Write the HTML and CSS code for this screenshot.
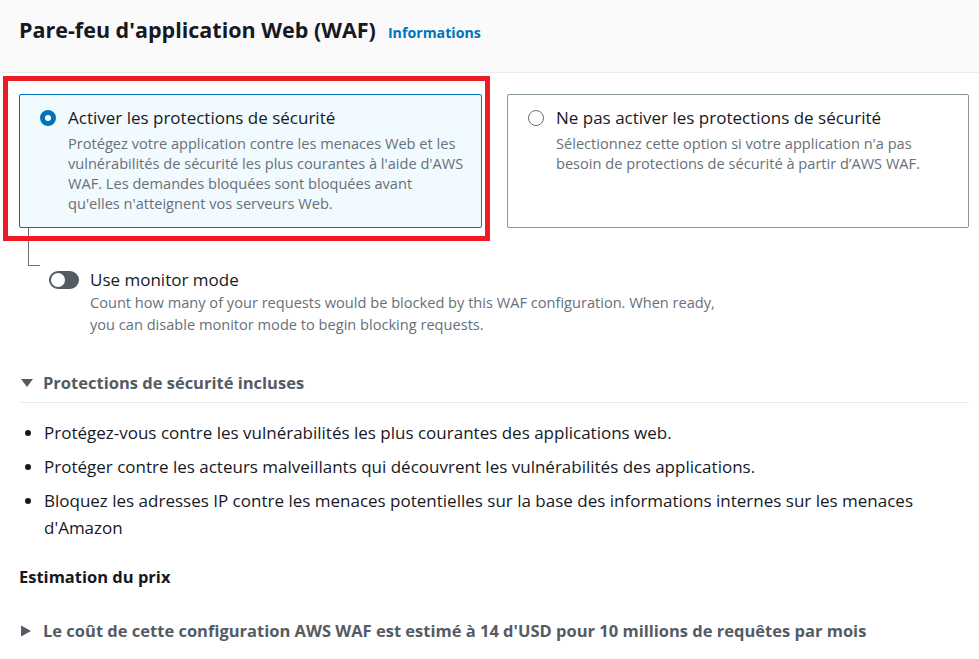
FILE: index.html
```html
<!DOCTYPE html>
<html lang="fr">
<head>
<meta charset="utf-8">
<title>Pare-feu d'application Web (WAF)</title>
<link rel="stylesheet" href="styles.css">
</head>
<body>
<header class="header">
  <h2 class="title">Pare-feu d'application Web (WAF)</h2>
  <a class="info" href="#">Informations</a>
</header>
<main class="main">
  <div class="tiles">
    <div class="tile tile-selected">
      <span class="radio radio-on"></span>
      <div class="tile-body">
        <div class="tile-title">Activer les protections de sécurité</div>
        <div class="tile-desc">Protégez votre application contre les menaces Web et les<br>vulnérabilités de sécurité les plus courantes à l'aide d'AWS<br>WAF. Les demandes bloquées sont bloquées avant<br>qu'elles n'atteignent vos serveurs Web.</div>
      </div>
    </div>
    <div class="tile">
      <span class="radio"></span>
      <div class="tile-body">
        <div class="tile-title">Ne pas activer les protections de sécurité</div>
        <div class="tile-desc">Sélectionnez cette option si votre application n'a pas<br>besoin de protections de sécurité à partir d’AWS WAF.</div>
      </div>
    </div>
  </div>
  <div class="connector"></div>
  <div class="toggle-row">
    <span class="toggle"><span class="knob"></span></span>
    <div class="toggle-body">
      <div class="toggle-label">Use monitor mode</div>
      <div class="toggle-desc">Count how many of your requests would be blocked by this WAF configuration. When ready,<br>you can disable monitor mode to begin blocking requests.</div>
    </div>
  </div>
  <div class="expander">
    <svg class="caret" width="14" height="10" viewBox="0 0 14 10"><path d="M1 1h12L7 9z" fill="#545b64"/></svg>
    <span>Protections de sécurité incluses</span>
  </div>
  <ul class="bullets">
    <li>Protégez-vous contre les vulnérabilités les plus courantes des applications web.</li>
    <li>Protéger contre les acteurs malveillants qui découvrent les vulnérabilités des applications.</li>
    <li>Bloquez les adresses IP contre les menaces potentielles sur la base des informations internes sur les menaces<br>d'Amazon</li>
  </ul>
  <h3 class="subhead">Estimation du prix</h3>
  <div class="expander expander-closed">
    <svg class="caret" width="12" height="12" viewBox="0 0 12 12"><path d="M1 0.5l10 5.5-10 5.5z" fill="#545b64"/></svg>
    <span>Le coût de cette configuration AWS WAF est estimé à 14 d'USD pour 10 millions de requêtes par mois</span>
  </div>
</main>
<div class="highlight"></div>
</body>
</html>
```
FILE: styles.css
```css
* { box-sizing: border-box; }
html, body { margin: 0; padding: 0; background: #fff; }
body {
  font-family: "Open Sans", "Noto Sans", Arial, sans-serif;
  color: #16191f;
  width: 979px;
  height: 659px;
  overflow: hidden;
  position: relative;
}
.header {
  height: 73px;
  background: #fafafa;
  border-bottom: 1px solid #eaeded;
  display: flex;
  align-items: baseline;
  padding: 15px 20px 0 19px;
}
.title {
  margin: 0;
  font-size: 21.5px;
  line-height: 30px;
  font-weight: 700;
  color: #16191f;
}
.info {
  margin-left: 12px;
  font-size: 14.2px;
  font-weight: 700;
  color: #0073bb;
  text-decoration: none;
}
.main { padding: 21px 10px 0 19px; }
.tiles {
  display: grid;
  grid-template-columns: 463px 462px;
  column-gap: 25px;
}
.tile {
  display: flex;
  align-items: flex-start;
  gap: 12px;
  height: 134px;
  border: 1px solid #879596;
  border-radius: 2px;
  padding: 12px 8px 14px 20px;
  background: #fff;
}
.tile-selected { border-color: #0073bb; background: #f1faff; }
.radio {
  flex: none;
  width: 16px;
  height: 16px;
  margin-top: 3px;
  border-radius: 50%;
  border: 1.5px solid #687078;
  background: #fff;
}
.radio-on { border: 5px solid #0073bb; }
.tile-title { font-size: 17px; line-height: 22px; color: #16191f; white-space: nowrap; }
.tile-desc { margin-top: 4px; font-size: 14.6px; line-height: 20px; color: #687078; white-space: nowrap; }
.connector {
  width: 12px;
  height: 38px;
  margin-left: 9px;
  border-left: 1px solid #687078;
  border-bottom: 1px solid #687078;
}
.toggle-row {
  display: flex;
  align-items: flex-start;
  gap: 11px;
  margin-top: 2px;
  padding-left: 30px;
}
.toggle {
  flex: none;
  position: relative;
  width: 30px;
  height: 18px;
  margin-top: 3px;
  border-radius: 9px;
  background: #545b64;
}
.knob {
  position: absolute;
  left: 2px;
  top: 2px;
  width: 14px;
  height: 14px;
  border-radius: 50%;
  background: #fff;
}
.toggle-label { font-size: 17px; line-height: 23px; }
.toggle-desc { font-size: 14.6px; line-height: 22px; color: #687078; white-space: nowrap; }
.expander {
  display: flex;
  align-items: center;
  gap: 9px;
  margin-top: 36px;
  padding: 0 0 7px 1px;
  border-bottom: 1px solid #eaeded;
  font-size: 16.5px;
  line-height: 24px;
  font-weight: 700;
  color: #545b64;
}
.expander .caret { flex: none; }
.bullets {
  margin: 16px 0 0;
  padding: 0 0 0 25px;
  font-size: 17px;
  line-height: 27px;
}
.bullets li { margin-bottom: 7px; }
.bullets li:last-child { margin-bottom: 0; }
.subhead {
  margin: 24px 0 0;
  font-size: 16.5px;
  line-height: 24px;
  font-weight: 700;
}
.expander-closed {
  margin-top: 30px;
  border-bottom: 0;
  gap: 11px;
  padding-left: 1px;
}
.highlight {
  position: absolute;
  left: 3px;
  top: 76px;
  width: 487px;
  height: 165px;
  border: 5px solid #ed1c24;
  pointer-events: none;
}
```
